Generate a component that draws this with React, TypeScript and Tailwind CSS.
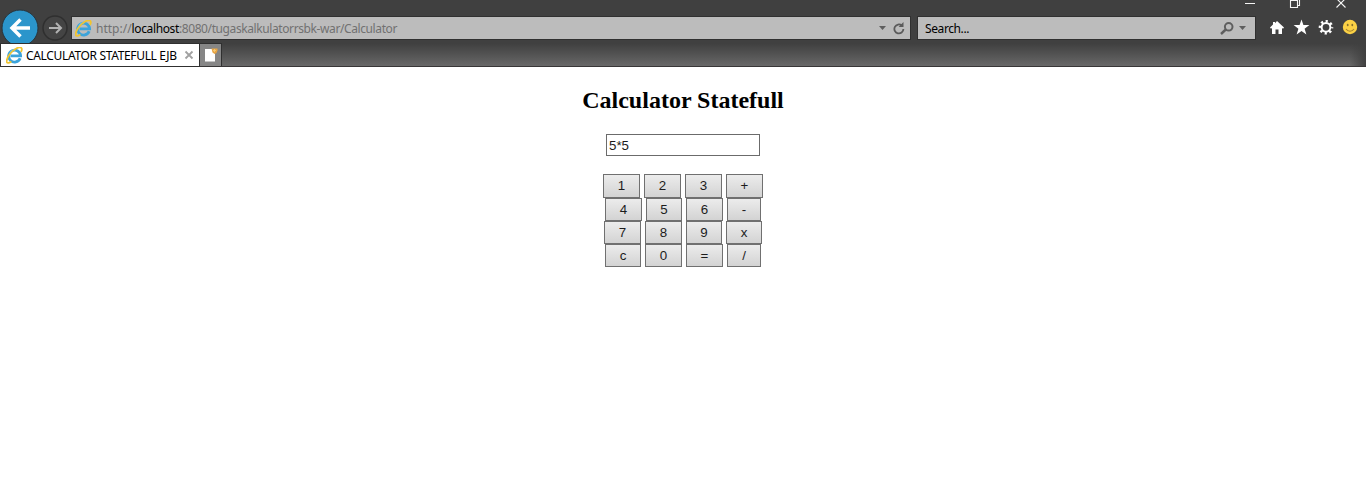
import React from "react";

const UI = "font-['Noto_Sans','Open_Sans',sans-serif]";

function IeLogo() {
  return (
    <svg width="17" height="17" viewBox="0.700 0.500 16.200 16.200" className="shrink-0" fill="none">
      <path d="M14.200 11.300A5.700 5.700 0 1 1 14.600 8.900H5" stroke="#3ba3da" strokeWidth="2.700" />
      <path d="M4.200 7.500C5 4.600 7 3.300 9 3.300" stroke="#75c8ee" strokeWidth="1.200" />
      <path d="M5.800 14.400C3.300 16.200 1.700 16.100 1.400 14.500.9 11 5.500 4.500 10.500 1.900c2.900-1.500 5.300-1.300 5.300.7 0 .9-.3 1.700-.8 2.700" stroke="#f0c430" strokeWidth="1.700" />
    </svg>
  );
}

function Caret() {
  return (
    <svg width="7" height="4" viewBox="0 0 7 4" className="shrink-0">
      <path d="M0 0h7L3.500 4z" fill="#5e5e5e" />
    </svg>
  );
}

function WindowControls() {
  return (
    <svg width="112" height="10" viewBox="1240 0 112 10" fill="none" stroke="#f4f4f4" strokeWidth="1.100">
      <path d="M1245 3.500h10M1290.500.5h7v7h-7zM1292.500.5v-2h7v7h-2M1336.500-1.500l9 9M1345.500-1.500l-9 9" />
    </svg>
  );
}

function Toolbar() {
  return (
    <div className="flex h-[43px] items-start">
      <svg width="71" height="43" viewBox="0 0 71 43" className="shrink-0">
        <circle cx="20" cy="28" r="18" fill="#2b95cb" stroke="#27333a" strokeWidth="1" />
        <path d="M30 28H12M20.500 19.500L12 28l8.500 8.500" fill="none" stroke="#fff" strokeWidth="3.500" />
        <circle cx="55" cy="28" r="12" fill="#444" stroke="#2f2f2f" strokeWidth="1.500" />
        <path d="M49 28h11M56 23l5 5-5 5" fill="none" stroke="#b2b2b2" strokeWidth="2" />
      </svg>
      <div className="mt-4 flex h-6 w-[840px] items-center border border-[#303030] bg-[#bcbcbc] pl-[3px] pr-[5px]">
        <IeLogo />
        <div className={`${UI} ml-1 flex-1 whitespace-nowrap pt-[2px] text-[12px] leading-[22px] tracking-[-0.4px] text-[#717171]`}>
          <span className="tracking-normal">http://</span>
          <span className="tracking-[-0.38px] text-black">localhost</span>:8080/tugaskalkulatorrsbk-war/Calculator
        </div>
        <Caret />
        <svg width="12" height="13" viewBox="0 0 12 13" className="ml-[7px]">
          <path d="M8.800 3.500A4.500 4.500 0 1 0 10.400 7" fill="none" stroke="#5b5b5b" strokeWidth="1.800" />
          <path d="M10.500 0v5H5.600z" fill="#5b5b5b" />
        </svg>
      </div>
      <div className="ml-[6px] mt-4 flex h-6 w-[339px] items-center border border-[#303030] bg-[#bcbcbc] pl-[7px] pr-[9px]">
        <span className={`${UI} flex-1 pt-[2px] text-[12px] leading-[22px] tracking-[-0.4px] text-black`}>Search...</span>
        <svg width="14" height="13" viewBox="0 0 14 13" className="mr-[5px]" fill="none" stroke="#5e5e5e">
          <circle cx="8.700" cy="4.800" r="3.800" strokeWidth="2" />
          <path d="M5.800 7.500L1 12" strokeWidth="2.400" />
        </svg>
        <Caret />
      </div>
      <svg width="110" height="43" viewBox="1256 0 110 43">
        <path d="M1277 21l7 6.500-1 1.200-1-.8V34h-3.500v-4.500h-3V34h-3.500v-6.100l-1 .8-1-1.200 3-2.900V22h2v1.200z" fill="#fff" />
        <path d="M1301.500 19.500l1.900 5.600h6l-4.800 3.600 1.800 5.800-4.900-3.500-4.900 3.500 1.800-5.800-4.800-3.600h6z" fill="#fff" />
        <circle cx="1326" cy="27.300" r="4.400" fill="none" stroke="#fff" strokeWidth="2" />
        <circle cx="1326" cy="27.300" r="6" fill="none" stroke="#fff" strokeWidth="2.600" strokeDasharray="2.200 2.512" strokeDashoffset="1.100" />
        <circle cx="1350" cy="27" r="7.200" fill="#fbd145" />
        <ellipse cx="1347.700" cy="25" rx="0.900" ry="1.300" fill="#87702e" />
        <ellipse cx="1352.300" cy="25" rx="0.900" ry="1.300" fill="#87702e" />
        <path d="M1346 29c2 3 6 3 8 0" fill="none" stroke="#a58430" strokeWidth="1.100" />
      </svg>
    </div>
  );
}

function TabStrip() {
  return (
    <div className="flex h-6 border-b border-[#383637] bg-linear-to-b from-[#3f3f3f] to-[#686868]">
      <div className="flex h-6 w-[200px] shrink-0 items-center border border-[#303030] bg-white pl-[5px]">
        <IeLogo />
        <span className={`${UI} ml-[3px] w-[154px] whitespace-nowrap pt-[2px] text-[12px] leading-[22px] tracking-[-0.34px] text-black`}>
          CALCULATOR STATEFULL EJB
        </span>
        <svg width="10" height="10" viewBox="0 0 10 10" className="ml-1 shrink-0">
          <path d="M1.500 1.500l7 7M8.500 1.500l-7 7" stroke="#a1a1a1" strokeWidth="1.800" />
        </svg>
      </div>
      <div className="flex h-[23px] w-[22px] items-center justify-center border-r border-t border-[#303030] bg-[#868686]">
        <svg width="14" height="14" viewBox="0 0 14 14">
          <path d="M1 1h7l3 3v9.500H1z" fill="#fff" />
          <path d="M7.500.5h6v2l-1 2.500-2 1-2-1.500z" fill="#e8a544" />
          <path d="M9 2.500h3M10.500 1v3" stroke="#f8ce7a" strokeWidth="0.800" />
        </svg>
      </div>
      <div className="flex-1" />
      <div className="w-4 bg-linear-to-r from-transparent to-[#404040]" />
    </div>
  );
}

const rows = [
  { pad: "pl-[603px] h-6", keys: [["1", "w-[37px]"], ["2", "w-[37px]"], ["3", "w-[37px]"], ["+", "w-[37px]"]] },
  { pad: "pl-[605px] h-[23px]", keys: [["4", "w-[37px]"], ["5", "w-[36px]"], ["6", "w-[37px]"], ["-", "w-[34px]"]] },
  { pad: "pl-[604px] h-[23px]", keys: [["7", "w-[37px]"], ["8", "w-[37px]"], ["9", "w-[36px]"], ["x", "w-[36px]"]] },
  { pad: "pl-[605px] h-[23px]", keys: [["c", "w-[36px]"], ["0", "w-[37px]"], ["=", "w-[37px]"], ["/", "w-[34px]"]] },
];

export default function App() {
  return (
    <div className="h-[483px] w-[1366px] overflow-hidden bg-white">
      <header className="flex h-[67px] flex-col bg-[#404040]">
        <div className="flex h-0 justify-end pr-[14px]">
          <WindowControls />
        </div>
        <Toolbar />
        <TabStrip />
      </header>
      <main className="flex flex-col font-['Liberation_Sans',Arial,sans-serif] text-[13.333px] text-[#1c1c1c]">
        <h2 className="mt-[19px] text-center font-['Liberation_Serif',serif] text-[24px] font-bold leading-7 text-black">
          Calculator Statefull
        </h2>
        <input
          aria-label="Expression"
          defaultValue="5*5"
          className="mt-5 h-[22px] w-[154px] self-center border border-[#6b6b6b] bg-white px-[2px] outline-none"
        />
        <div className="mt-[18px]">
          {rows.map((row) => (
            <div key={row.keys[0][0]} className={`flex gap-1 ${row.pad}`}>
              {row.keys.map(([label, width]) => (
                <button
                  key={label}
                  className={`${width} flex h-full shrink-0 items-center justify-center border border-[#707070] bg-linear-to-b from-[#ececec] to-[#d3d3d3] leading-none`}
                >
                  {label}
                </button>
              ))}
            </div>
          ))}
        </div>
      </main>
    </div>
  );
}
